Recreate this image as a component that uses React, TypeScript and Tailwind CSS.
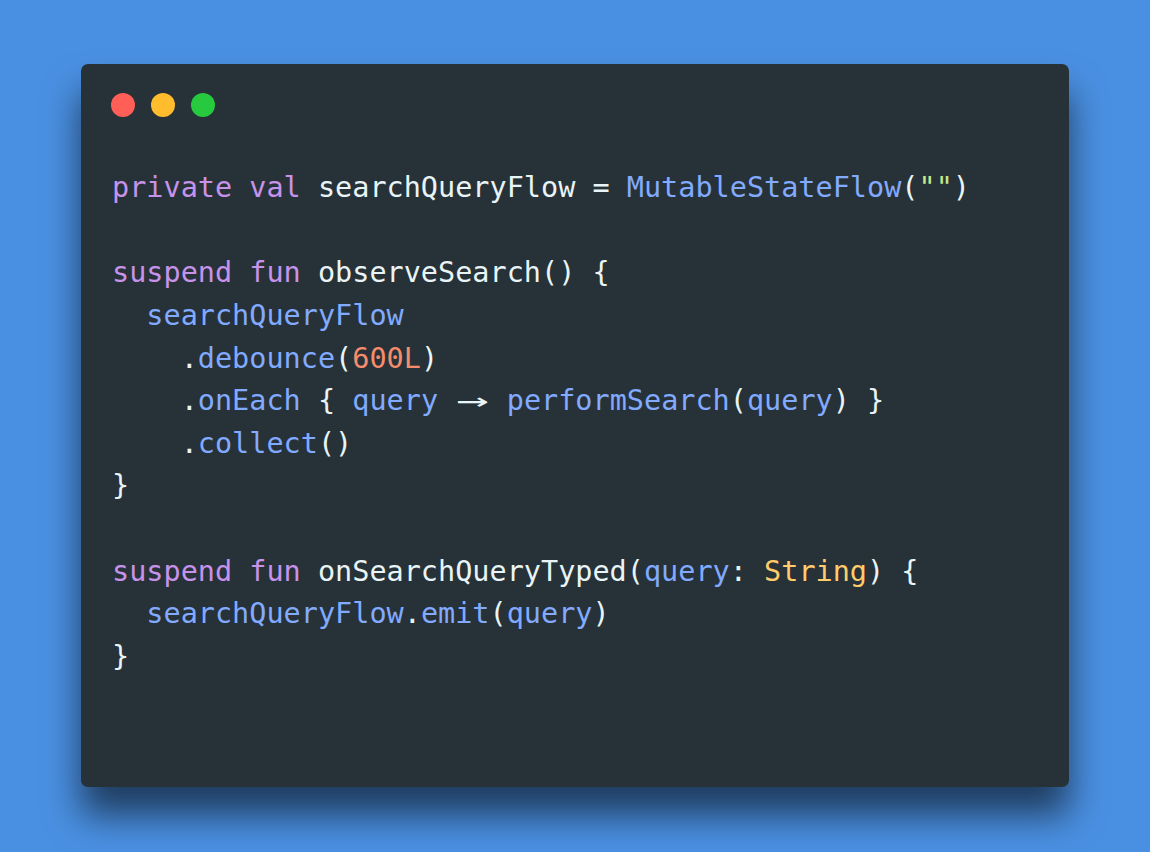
import React from 'react';

const K = ({ children }: { children: React.ReactNode }) => <span className="text-[#c792ea]">{children}</span>;
const F = ({ children }: { children: React.ReactNode }) => <span className="text-[#82aaff]">{children}</span>;
const N = ({ children }: { children: React.ReactNode }) => <span className="text-[#f78c6c]">{children}</span>;
const T = ({ children }: { children: React.ReactNode }) => <span className="text-[#ffcb6b]">{children}</span>;
const S = ({ children }: { children: React.ReactNode }) => <span className="text-[#c3e88d]">{children}</span>;

export default function App() {
  return (
    <div className="h-[852px] w-[1150px] overflow-hidden bg-[#4a90e2] pl-[81px] pt-[64px]">
      <div className="h-[723px] w-[988px] rounded-[7px] bg-[#263238] shadow-[0_28px_36px_rgba(0,0,0,0.58)]">
        <div className="flex gap-4 pl-[30px] pt-[29px]">
          <span className="h-6 w-6 rounded-full bg-[#ff5f56]" />
          <span className="h-6 w-6 rounded-full bg-[#ffbd2e]" />
          <span className="h-6 w-6 rounded-full bg-[#27c93f]" />
        </div>

        <pre className="mt-[50px] pl-[31px] font-['DejaVu_Sans_Mono',monospace] text-[28.5px] leading-[42.64px] text-[#e9f4f6]">
          <div><K>private</K> <K>val</K> searchQueryFlow = <F>MutableStateFlow</F>(<S>""</S>)</div>
          <div>&nbsp;</div>
          <div><K>suspend</K> <K>fun</K> observeSearch() {'{'}</div>
          <div>  <F>searchQueryFlow</F></div>
          <div>    .<F>debounce</F>(<N>600L</N>)</div>
          <div>
            {'    .'}<F>onEach</F> {'{'} <F>query</F>{' '}
            <span className="inline-block w-[2ch] text-center">
              <span className="inline-block scale-x-[1.9]">→</span>
            </span>{' '}
            <F>performSearch</F>(<F>query</F>) {'}'}
          </div>
          <div>    .<F>collect</F>()</div>
          <div>{'}'}</div>
          <div>&nbsp;</div>
          <div><K>suspend</K> <K>fun</K> onSearchQueryTyped(<F>query</F>: <T>String</T>) {'{'}</div>
          <div>  <F>searchQueryFlow</F>.<F>emit</F>(<F>query</F>)</div>
          <div>{'}'}</div>
        </pre>
      </div>
    </div>
  );
}
